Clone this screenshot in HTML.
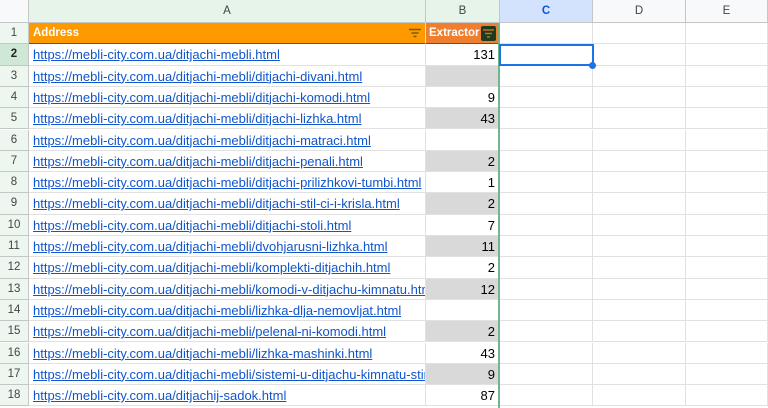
<!DOCTYPE html><html><head><style>
body{margin:0;width:768px;height:408px;overflow:hidden;background:#fff;font-family:"Liberation Sans",Arial,sans-serif;position:relative}
.c{position:absolute;box-sizing:border-box;border-right:1px solid #e1e1e1;border-bottom:1px solid #e1e1e1;font-size:13px;overflow:hidden;white-space:nowrap}
.hd{background:#f8f9fa;color:#444;text-align:center;font-size:11.5px;line-height:22px;border-color:#c4c7c5}
.rh{background:#eef6f0;color:#444;text-align:center;font-size:11.5px;border-color:#c4c7c5}
a{color:#1155cc;text-decoration:underline}
</style></head><body>
<div class="c hd" style="left:0;top:0;width:29px;height:23px;background:#f8f9fa"></div>
<div class="c hd" style="left:29px;top:0;width:397px;height:23px;background:#e6f4ea">A</div>
<div class="c hd" style="left:426px;top:0;width:74px;height:23px;background:#e6f4ea">B</div>
<div class="c hd" style="left:500px;top:0;width:93px;height:23px;background:#d3e3fd;color:#0b57d0;font-weight:bold">C</div>
<div class="c hd" style="left:593px;top:0;width:93px;height:23px">D</div>
<div class="c hd" style="left:686px;top:0;width:82px;height:23px">E</div>
<div id="g"></div>
<div style="position:absolute;left:498px;top:23px;width:2px;height:385px;background:#74b58a"></div>
<div style="position:absolute;left:499px;top:44px;width:95px;height:22px;box-sizing:border-box;border:2px solid #1a73e8"></div>
<div style="position:absolute;left:589px;top:62px;width:7px;height:7px;border-radius:50%;background:#1a73e8"></div>
<script>
var urls=["https://mebli-city.com.ua/ditjachi-mebli.html","https://mebli-city.com.ua/ditjachi-mebli/ditjachi-divani.html","https://mebli-city.com.ua/ditjachi-mebli/ditjachi-komodi.html","https://mebli-city.com.ua/ditjachi-mebli/ditjachi-lizhka.html","https://mebli-city.com.ua/ditjachi-mebli/ditjachi-matraci.html","https://mebli-city.com.ua/ditjachi-mebli/ditjachi-penali.html","https://mebli-city.com.ua/ditjachi-mebli/ditjachi-prilizhkovi-tumbi.html","https://mebli-city.com.ua/ditjachi-mebli/ditjachi-stil-ci-i-krisla.html","https://mebli-city.com.ua/ditjachi-mebli/ditjachi-stoli.html","https://mebli-city.com.ua/ditjachi-mebli/dvohjarusni-lizhka.html","https://mebli-city.com.ua/ditjachi-mebli/komplekti-ditjachih.html","https://mebli-city.com.ua/ditjachi-mebli/komodi-v-ditjachu-kimnatu.html","https://mebli-city.com.ua/ditjachi-mebli/lizhka-dlja-nemovljat.html","https://mebli-city.com.ua/ditjachi-mebli/pelenal-ni-komodi.html","https://mebli-city.com.ua/ditjachi-mebli/lizhka-mashinki.html","https://mebli-city.com.ua/ditjachi-mebli/sistemi-u-ditjachu-kimnatu-stinki.html","https://mebli-city.com.ua/ditjachij-sadok.html"];
var v=["131","","9","43","","2","1","2","7","11","2","12","","2","43","9","87"];
var h="",H=21.3;
var fil='<svg width="12" height="10" viewBox="0 0 12 10"><path d="M0 1.5h12M2.5 5h7M4.5 8.5h3" stroke="#7a5a00" stroke-width="1.5"/></svg>';
for(var r=1;r<=18;r++){var t=23+(r-1)*H;
h+='<div class="c rh" style="left:0;top:'+t+'px;width:29px;height:'+H+'px;line-height:'+H+'px;'+(r==2?'background:#cfe8d6;font-weight:bold;color:#222':'')+'">'+r+'</div>';
if(r==1){h+='<div class="c" style="left:29px;top:'+t+'px;width:397px;height:'+H+'px;background:#ff9900;color:#fff;font-weight:bold;font-size:11.5px;line-height:'+H+'px;padding-left:4px;border-bottom:1px solid #555">Address<span style="position:absolute;right:4px;top:5px;line-height:0">'+fil+'</span></div>';
h+='<div class="c" style="left:426px;top:'+t+'px;width:74px;height:'+H+'px;background:#ef7f2f;color:#fff;font-weight:bold;font-size:11.5px;line-height:'+H+'px;padding-left:3px;border-bottom:1px solid #555">Extractor<span style="position:absolute;right:3px;top:3px;width:15px;height:15px;background:#1f3a1c;border-radius:2px;line-height:0"><svg width="15" height="15" viewBox="0 0 15 15"><path d="M2 4h11M4 7.5h7M6 11h3" stroke="#c07020" stroke-width="1.5"/></svg></span></div>';}
else{var i=r-2;
h+='<div class="c" style="left:29px;top:'+t+'px;width:397px;height:'+H+'px;line-height:'+H+'px;padding-left:4px"><a>'+urls[i]+'</a></div>';
h+='<div class="c" style="left:426px;top:'+t+'px;width:74px;height:'+H+'px;line-height:'+H+'px;text-align:right;padding-right:4px;'+(r%2?'background:#d9d9d9':'')+'">'+v[i]+'</div>';}
h+='<div class="c" style="left:500px;top:'+t+'px;width:93px;height:'+H+'px"></div><div class="c" style="left:593px;top:'+t+'px;width:93px;height:'+H+'px"></div><div class="c" style="left:686px;top:'+t+'px;width:82px;height:'+H+'px"></div>';}
document.getElementById('g').innerHTML=h;
</script>
</body></html>
